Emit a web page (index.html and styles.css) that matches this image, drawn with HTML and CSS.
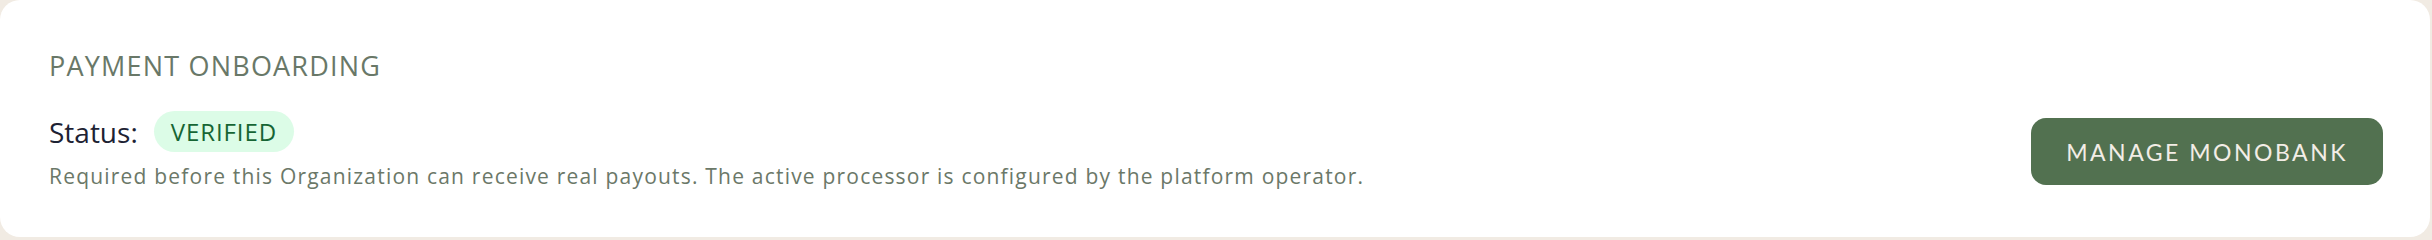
FILE: index.html
```html
<!DOCTYPE html>
<html lang="en">
<head>
    <meta charset="UTF-8">
    <meta name="viewport" content="width=device-width, initial-scale=1.0">
    <title>Payment Onboarding</title>
    <link rel="stylesheet" href="styles.css">
</head>
<body>
    <section class="card">
        <div class="card-info">
            <h2 class="card-title">PAYMENT ONBOARDING</h2>
            <div class="status-row">
                <span class="status-label">Status:</span>
                <span class="badge badge-verified">VERIFIED</span>
            </div>
            <p class="card-note">Required before this Organization can receive real payouts. The active processor is configured by the platform operator.</p>
        </div>
        <button class="manage-button">MANAGE MONOBANK</button>
    </section>
</body>
</html>
```

FILE: styles.css
```css
body {
    margin: 0;
    background: #f1ebe3;
    font-family: 'Open Sans', 'Noto Sans', sans-serif;
}

.card {
    display: flex;
    justify-content: space-between;
    align-items: flex-start;
    height: 237px;
    box-sizing: border-box;
    margin: 0 2px 0 0;
    padding: 50px 47px 50px 49px;
    background: #ffffff;
    border-radius: 20px;
}

.card-title {
    margin: 0 0 29px;
    font-size: 27px;
    font-weight: 400;
    line-height: 32px;
    color: #697868;
    letter-spacing: 1.2px;
}

.status-row {
    display: flex;
    align-items: center;
    gap: 16px;
}

.status-label {
    font-size: 28px;
    color: #1d2233;
}

.badge {
    display: inline-block;
    padding: 0 17px;
    height: 41px;
    line-height: 41px;
    border-radius: 21px;
    font-size: 24px;
    letter-spacing: 0.9px;
}

.badge-verified {
    background: #dcfce7;
    color: #166534;
}

.card-note {
    margin: 10px 0 0;
    font-size: 21px;
    line-height: 28px;
    color: #6b7868;
    letter-spacing: 1.2px;
}

.manage-button {
    align-self: flex-end;
    height: 67px;
    padding: 0 35px;
    margin-bottom: 2px;
    background: #527150;
    color: #f3ede6;
    border: none;
    border-radius: 15px;
    font-family: 'Lato', 'Noto Sans', sans-serif;
    font-size: 23px;
    letter-spacing: 2.5px;
    cursor: pointer;
}
```
